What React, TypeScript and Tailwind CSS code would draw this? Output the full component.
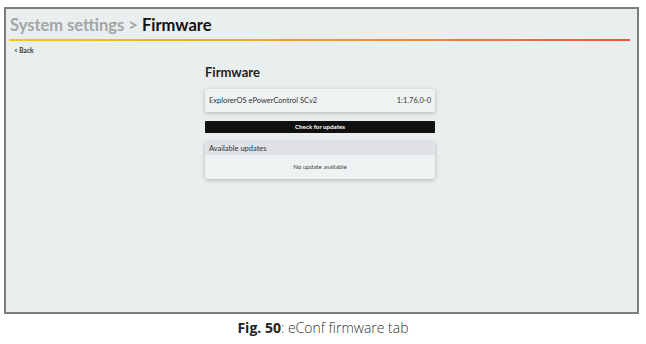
export default function App() {
  return (
    <div className="w-[646px] h-[344px] bg-white flex flex-col items-start" style={{ fontFamily: 'Lato, "Open Sans", sans-serif' }}>
      <div className="ml-[4px] mt-[7px] w-[635px] h-[307px] border-2 border-[#7d7d7d] bg-[#e9eeee] flex flex-col">
        <div className="pl-[4px] pt-[7px] h-[30px] text-[16.5px] font-bold leading-[19px]">
          <span className="text-[#a3a5a6]">System settings &gt; </span>
          <span className="text-[#111]">Firmware</span>
        </div>
        <div className="ml-[3px] mr-[7px] h-[2px] bg-[#f29a2e] bg-linear-to-r from-[#f6c21f] via-[#f29a2e] to-[#e8553a]" />
        <div className="pl-[8px] pt-[6px] text-[6.5px] font-bold text-[#333] leading-[8px]">&lt; Back</div>
        <div className="ml-[199px] w-[230px] flex flex-col">
          <h1 className="mt-[10px] text-[13px] font-bold text-[#222] leading-[15px]">Firmware</h1>
          <div className="mt-[9px] h-[23px] bg-[#eef2f2] rounded-[2px] shadow-[0_1px_4px_rgba(0,0,0,0.25)] flex items-center justify-between px-[4px] text-[7.5px] text-[#333]">
            <span>ExplorerOS ePowerControl SCv2</span>
            <span>1:1.76.0-0</span>
          </div>
          <button className="mt-[9px] h-[12px] bg-[#111] rounded-[1px] text-white text-[6.2px] font-bold flex items-center justify-center">
            Check for updates
          </button>
          <div className="mt-[9px] h-[37px] rounded-[2px] bg-[#eef2f2] shadow-[0_1px_4px_rgba(0,0,0,0.25)] flex flex-col overflow-hidden">
            <div className="h-[13px] bg-[#e2e2e6] px-[4px] flex items-center text-[7.5px] text-[#333]">Available updates</div>
            <div className="flex-1 flex items-center justify-center text-[6.2px] text-[#444]">No update available</div>
          </div>
        </div>
      </div>
      <div className="w-full mt-[6px] text-center text-[14px] font-light text-[#333] leading-[16px]" style={{ fontFamily: '"Open Sans", sans-serif' }}>
        <span className="font-bold text-[#222]">Fig. 50</span>: eConf firmware tab
      </div>
    </div>
  )
}
